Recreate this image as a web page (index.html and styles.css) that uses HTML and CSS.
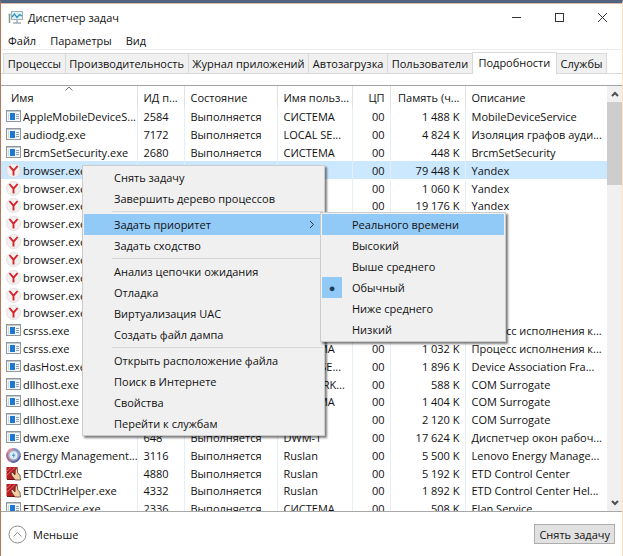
FILE: index.html
```html
<!DOCTYPE html>
<html lang="ru">

<head>
    <meta charset="UTF-8" />
    <meta name="viewport" content="width=device-width, initial-scale=1.0" />
    <title>Диспетчер задач</title>
    <link rel="stylesheet" href="styles.css">
</head>

<body>
    <!-- Иконки -->
    <svg class="sprite" aria-hidden="true">
        <symbol id="icon-app" viewBox="0 0 15 13">
            <rect x="0.5" y="0.5" width="14" height="11" fill="#f4f6f7" stroke="#8e989e" />
            <path d="M1 1.5h13" stroke="#c3cacf" />
            <rect x="4" y="3" width="5" height="7" fill="#1c78d0" />
            <path d="M2.5 3v7" stroke="#cfd8de" />
            <path d="M10 4.5h3M10 6.5h3M10 8.5h3" stroke="#8fa0ad" />
        </symbol>
        <symbol id="icon-yandex" viewBox="0 0 15 15">
            <circle cx="7.5" cy="7.5" r="7" fill="#f3f1f0" stroke="#dcdada" stroke-width="0.8" />
            <path d="M3.4 3L7.5 7.7L11.6 3M7.5 7.5V12.6" fill="none" stroke="#d8232a" stroke-width="1.9" />
        </symbol>
        <symbol id="icon-energy" viewBox="0 0 15 15">
            <circle cx="7.5" cy="7.5" r="6.8" fill="#a9a6b8" />
            <path d="M1.5 5A6.6 6.6 0 0 1 8 1" fill="none" stroke="#d98a9a" stroke-width="2" />
            <path d="M8 1a6.6 6.6 0 0 1 6 7" fill="none" stroke="#7693cc" stroke-width="2" />
            <path d="M14 8a6.6 6.6 0 0 1-9 5.4" fill="none" stroke="#5268b4" stroke-width="2" />
            <path d="M5 13.4A6.6 6.6 0 0 1 1.5 5" fill="none" stroke="#b06a92" stroke-width="2" />
            <circle cx="7.5" cy="7.3" r="4" fill="#d8edf8" />
            <path d="M8 4.5L5.8 8h1.7L6.8 10.5L9.5 6.8H7.8z" fill="#4a95d0" />
        </symbol>
        <symbol id="icon-touch" viewBox="0 0 15 15">
            <rect x="0.5" y="1" width="11" height="12" fill="#b51f24" />
            <path d="M1 9L9 1.5M1 5L5 1.5" stroke="#e2686a" stroke-width="1" />
            <path d="M5 7L6.5 6.5L9 9L9.5 3L11 2.5L12 7.5L14 9L14.5 14H9L5.5 9z" fill="#efcfa4" stroke="#59332a" stroke-width="0.7" />
            <path d="M1 13.5h8" stroke="#701518" />
        </symbol>
    </svg>

    <div class="window">
        <header class="titlebar">
            <svg class="logo" width="16" height="15" viewBox="0 0 16 15" aria-hidden="true">
                <path d="M1.5 5v8M0.5 4.5h2" stroke="#7c9a86" stroke-width="1.5" />
                <rect x="3.5" y="1.5" width="11" height="8" fill="#d9f1f8" stroke="#a3afb4" />
                <path d="M4 7l2.5-3L9 7.5L11.5 4.5L14 6" fill="none" stroke="#2d8fb3" stroke-width="1.2" />
                <path d="M9 10v2.5M5 13h8" stroke="#a3afb4" stroke-width="1.5" />
            </svg>
            <h1>Диспетчер задач</h1>
            <div class="window-buttons">
                <button type="button" aria-label="Свернуть">
                    <svg width="11" height="11" viewBox="0 0 11 11"><path d="M1 5.5h9" /></svg>
                </button>
                <button type="button" aria-label="Развернуть">
                    <svg width="11" height="11" viewBox="0 0 11 11"><rect x="1.5" y="1.5" width="8" height="8" /></svg>
                </button>
                <button type="button" aria-label="Закрыть">
                    <svg width="11" height="11" viewBox="0 0 11 11"><path d="M1 1l9 9M10 1l-9 9" /></svg>
                </button>
            </div>
        </header>

        <nav class="menubar">
            <button type="button">Файл</button>
            <button type="button">Параметры</button>
            <button type="button">Вид</button>
        </nav>

        <div class="tabs" role="tablist">
            <button type="button" role="tab">Процессы</button>
            <button type="button" role="tab">Производительность</button>
            <button type="button" role="tab">Журнал приложений</button>
            <button type="button" role="tab">Автозагрузка</button>
            <button type="button" role="tab">Пользователи</button>
            <button type="button" role="tab" class="active" aria-selected="true">Подробности</button>
            <button type="button" role="tab">Службы</button>
        </div>

        <main class="details">
            <div class="list">
                <table>
                    <colgroup>
                        <col class="col-name">
                        <col class="col-pid">
                        <col class="col-state">
                        <col class="col-user">
                        <col class="col-cpu">
                        <col class="col-memory">
                        <col>
                    </colgroup>
                    <thead>
                        <tr>
                            <th class="sorted">Имя
                                <svg width="8" height="5" viewBox="0 0 8 5" aria-hidden="true"><path d="M0.5 4.5L4 1l3.5 3.5" /></svg>
                            </th>
                            <th>ИД п...</th>
                            <th>Состояние</th>
                            <th>Имя польз...</th>
                            <th class="num">ЦП</th>
                            <th class="num">Память (ч...</th>
                            <th>Описание</th>
                        </tr>
                    </thead>
                    <tbody id="processes"></tbody>
                </table>
            </div>
            <div class="scrollbar">
                <button type="button" aria-label="Вверх">
                    <svg width="8" height="6" viewBox="0 0 8 6"><path d="M1 5l3-3l3 3" /></svg>
                </button>
                <div class="thumb"></div>
                <button type="button" aria-label="Вниз">
                    <svg width="8" height="6" viewBox="0 0 8 6"><path d="M1 1l3 3l3-3" /></svg>
                </button>
            </div>
        </main>

        <footer class="footer">
            <button type="button" class="less">
                <svg width="19" height="19" viewBox="0 0 19 19" aria-hidden="true">
                    <circle cx="9.5" cy="9.5" r="8.5" />
                    <path d="M5.5 11.5l4-4l4 4" />
                </svg>
                Меньше
            </button>
            <button type="button" class="end-task">Снять задачу</button>
        </footer>

        <div class="menu context-menu" role="menu">
            <button type="button" role="menuitem">Снять задачу</button>
            <button type="button" role="menuitem">Завершить дерево процессов</button>
            <hr>
            <button type="button" role="menuitem" class="selected">Задать приоритет
                <svg width="6" height="9" viewBox="0 0 6 9" aria-hidden="true"><path d="M1 1l3.5 3.5L1 8" /></svg>
            </button>
            <button type="button" role="menuitem">Задать сходство</button>
            <hr>
            <button type="button" role="menuitem">Анализ цепочки ожидания</button>
            <button type="button" role="menuitem">Отладка</button>
            <button type="button" role="menuitem">Виртуализация UAC</button>
            <button type="button" role="menuitem">Создать файл дампа</button>
            <hr>
            <button type="button" role="menuitem">Открыть расположение файла</button>
            <button type="button" role="menuitem">Поиск в Интернете</button>
            <button type="button" role="menuitem">Свойства</button>
            <button type="button" role="menuitem">Перейти к службам</button>
        </div>

        <div class="menu submenu" role="menu">
            <button type="button" role="menuitemradio" class="selected">Реального времени</button>
            <button type="button" role="menuitemradio">Высокий</button>
            <button type="button" role="menuitemradio">Выше среднего</button>
            <button type="button" role="menuitemradio" class="checked" aria-checked="true">Обычный</button>
            <button type="button" role="menuitemradio">Ниже среднего</button>
            <button type="button" role="menuitemradio">Низкий</button>
        </div>
    </div>

    <script src="script.js"></script>
</body>

</html>
```

FILE: styles.css
```css
* {
    box-sizing: border-box;
}

body {
    margin: 0;
    font-family: "Open Sans", "Noto Sans", sans-serif;
    font-size: 11px;
    color: #111;
    background-color: #fff;
}

button {
    margin: 0;
    padding: 0;
    border: none;
    background: none;
    font: inherit;
    color: inherit;
    white-space: nowrap;
}

svg {
    fill: none;
    stroke: #333;
}

.sprite {
    position: absolute;
    width: 0;
    height: 0;
}

.window {
    position: relative;
    display: flex;
    flex-direction: column;
    height: 100vh;
    border-top: 3px solid #50647f;
    border-left: 1px solid #b5785c;
    border-right: 1px solid #fbe3c8;
    overflow: hidden;
}

/* Заголовок окна */
.titlebar {
    display: flex;
    align-items: center;
    height: 28px;
    padding-left: 7px;
    border-top: 1px solid #d9b9a9;
    flex: none;
}

.titlebar h1 {
    flex: 1;
    margin: 0 0 0 4px;
    font-size: 11px;
    font-weight: normal;
}

.window-buttons {
    display: flex;
    gap: 32px;
    padding-right: 14px;
}

.window-buttons button {
    display: flex;
}

.menubar {
    display: flex;
    gap: 14px;
    height: 19px;
    padding-left: 7px;
    border-bottom: 1px solid #ececec;
    flex: none;
}

/* Вкладки */
.tabs {
    display: flex;
    align-items: flex-end;
    height: 24px;
    padding: 0 16px 0 2px;
    border-bottom: 1px solid #d9d9d9;
    flex: none;
}

.tabs button {
    flex: 1 0 auto;
    height: 20px;
    border: 1px solid #d9d9d9;
    border-bottom: none;
    margin-right: -1px;
    background-color: #f0f0f0;
}

.tabs .active {
    height: 22px;
    margin-bottom: -1px;
    padding: 0 2px 3px;
    background-color: #fff;
}

/* Список процессов */
.details {
    display: flex;
    flex: 1;
    min-height: 0;
    margin-top: 11px;
    border-top: 1px solid #a0a5a8;
    border-bottom: 1px solid #a8a8a8;
}

.list {
    flex: 1;
    min-width: 0;
    overflow: hidden;
}

table {
    width: 100%;
    height: calc(100% + 7px);
    table-layout: fixed;
    border-collapse: collapse;
}

.col-name {
    width: 136px;
}

.col-pid {
    width: 47px;
}

.col-state {
    width: 93px;
}

.col-user {
    width: 75px;
}

.col-cpu {
    width: 38px;
}

.col-memory {
    width: 75px;
}

th,
td {
    padding: 0 0 0 6px;
    border-right: 1px solid #e6eff7;
    font-weight: normal;
    text-align: left;
    line-height: 17px;
    white-space: nowrap;
    overflow: hidden;
}

th {
    height: 22px;
    border-color: #e2e2e2;
}

td:first-child {
    padding-left: 5px;
}

th:first-child {
    padding-left: 10px;
}

th:last-child,
td:last-child {
    border-right: none;
}

.num {
    padding-right: 5px;
    text-align: right;
}

.sorted {
    position: relative;
}

.sorted svg {
    position: absolute;
    top: 0;
    left: 47%;
    stroke: #777;
}

td svg {
    width: 15px;
    height: 15px;
    margin-right: 2px;
    vertical-align: -3px;
    stroke: none;
}

tr.selected {
    background-color: #cce8ff;
}

.scrollbar {
    display: flex;
    flex-direction: column;
    width: 15px;
    background-color: #f0f0f0;
}

.scrollbar button {
    display: flex;
    align-items: center;
    justify-content: center;
    height: 16px;
}

.scrollbar svg {
    stroke: #505050;
    stroke-width: 2;
}

.thumb {
    height: 83px;
    margin-bottom: auto;
    background-color: #cdcdcd;
}

.footer {
    display: flex;
    align-items: center;
    justify-content: space-between;
    height: 44px;
    padding: 0 7px;
    flex: none;
}

.less {
    display: flex;
    align-items: center;
    gap: 6px;
}

.less svg {
    stroke: #8a8a8a;
}

.end-task {
    height: 20px;
    padding: 0 4px;
    border: 1px solid #adadad;
    background-color: #e1e1e1;
}

/* Контекстное меню */
.menu {
    position: absolute;
    display: flex;
    flex-direction: column;
    padding: 1px;
    border: 1px solid #ccc;
    background-color: #f0f0f0;
    box-shadow: 2px 2px 2px rgba(0, 0, 0, 0.5);
}

.menu button {
    display: flex;
    align-items: center;
    justify-content: space-between;
    height: 21px;
    padding: 0 8px 0 30px;
    text-align: left;
}

.menu hr {
    width: calc(100% - 28px);
    height: 1px;
    margin: 2px 0 2px 28px;
    border: none;
    background-color: #d7d7d7;
}

.menu .selected {
    background-color: #91c9f7;
}

.context-menu {
    top: 162px;
    left: 81px;
    width: 243px;
}

.submenu {
    top: 209px;
    left: 319px;
    width: 186px;
}

.menu .checked {
    justify-content: flex-start;
    padding-left: 0;
}

.checked::before {
    content: "●";
    width: 20px;
    margin-right: 10px;
    background-color: #91c9f7;
    color: #1d3c57;
    font-size: 11px;
    line-height: 21px;
    text-align: center;
}
```

FILE: script.js
```javascript
// имя, иконка, ИД, пользователь, память, описание
const processes = [
    ["AppleMobileDeviceS...", "app", 2584, "СИСТЕМА", "1 488", "MobileDeviceService"],
    ["audiodg.exe", "app", 7172, "LOCAL SE...", "4 824", "Изоляция графов ауди..."],
    ["BrcmSetSecurity.exe", "app", 2680, "СИСТЕМА", "448", "BrcmSetSecurity"],
    ["browser.exe", "yandex", "", "", "79 448", "Yandex"],
    ["browser.exe", "yandex", "", "", "1 060", "Yandex"],
    ["browser.exe", "yandex", "", "", "19 176", "Yandex"],
    ["browser.exe", "yandex", "", "", "", ""],
    ["browser.exe", "yandex", "", "", "", ""],
    ["browser.exe", "yandex", "", "", "", ""],
    ["browser.exe", "yandex", "", "", "", ""],
    ["browser.exe", "yandex", "", "", "", ""],
    ["browser.exe", "yandex", "", "", "", ""],
    ["csrss.exe", "app", "", "", "", "Процесс исполнения к..."],
    ["csrss.exe", "app", "", "СИСТЕМА", "1 032", "Процесс исполнения к..."],
    ["dasHost.exe", "app", "", "LOCAL SE...", "1 896", "Device Association Fra..."],
    ["dllhost.exe", "app", "", "NETWORK...", "588", "COM Surrogate"],
    ["dllhost.exe", "app", "", "СИСТЕМА", "1 404", "COM Surrogate"],
    ["dllhost.exe", "app", "", "", "2 120", "COM Surrogate"],
    ["dwm.exe", "app", 648, "DWM-1", "17 624", "Диспетчер окон рабоч..."],
    ["Energy Management...", "energy", 3116, "Ruslan", "5 500", "Lenovo Energy Manage..."],
    ["ETDCtrl.exe", "touch", 4880, "Ruslan", "5 192", "ETD Control Center"],
    ["ETDCtrlHelper.exe", "touch", 4332, "Ruslan", "1 892", "ETD Control Center Hel..."],
    ["ETDService.exe", "app", 2336, "СИСТЕМА", "508", "Elan Service"]
];

const tbody = document.getElementById("processes");

processes.forEach(function (p, index) {
    const row = document.createElement("tr");
    if (index === 3) {
        row.className = "selected";
    }
    row.innerHTML = `
        <td><svg aria-hidden="true"><use href="#icon-${p[1]}" /></svg>${p[0]}</td>
        <td>${p[2]}</td>
        <td>${p[2] ? "Выполняется" : ""}</td>
        <td>${p[3]}</td>
        <td class="num">00</td>
        <td class="num">${p[4] ? p[4] + " K" : ""}</td>
        <td>${p[5]}</td>`;
    tbody.appendChild(row);
});
```
